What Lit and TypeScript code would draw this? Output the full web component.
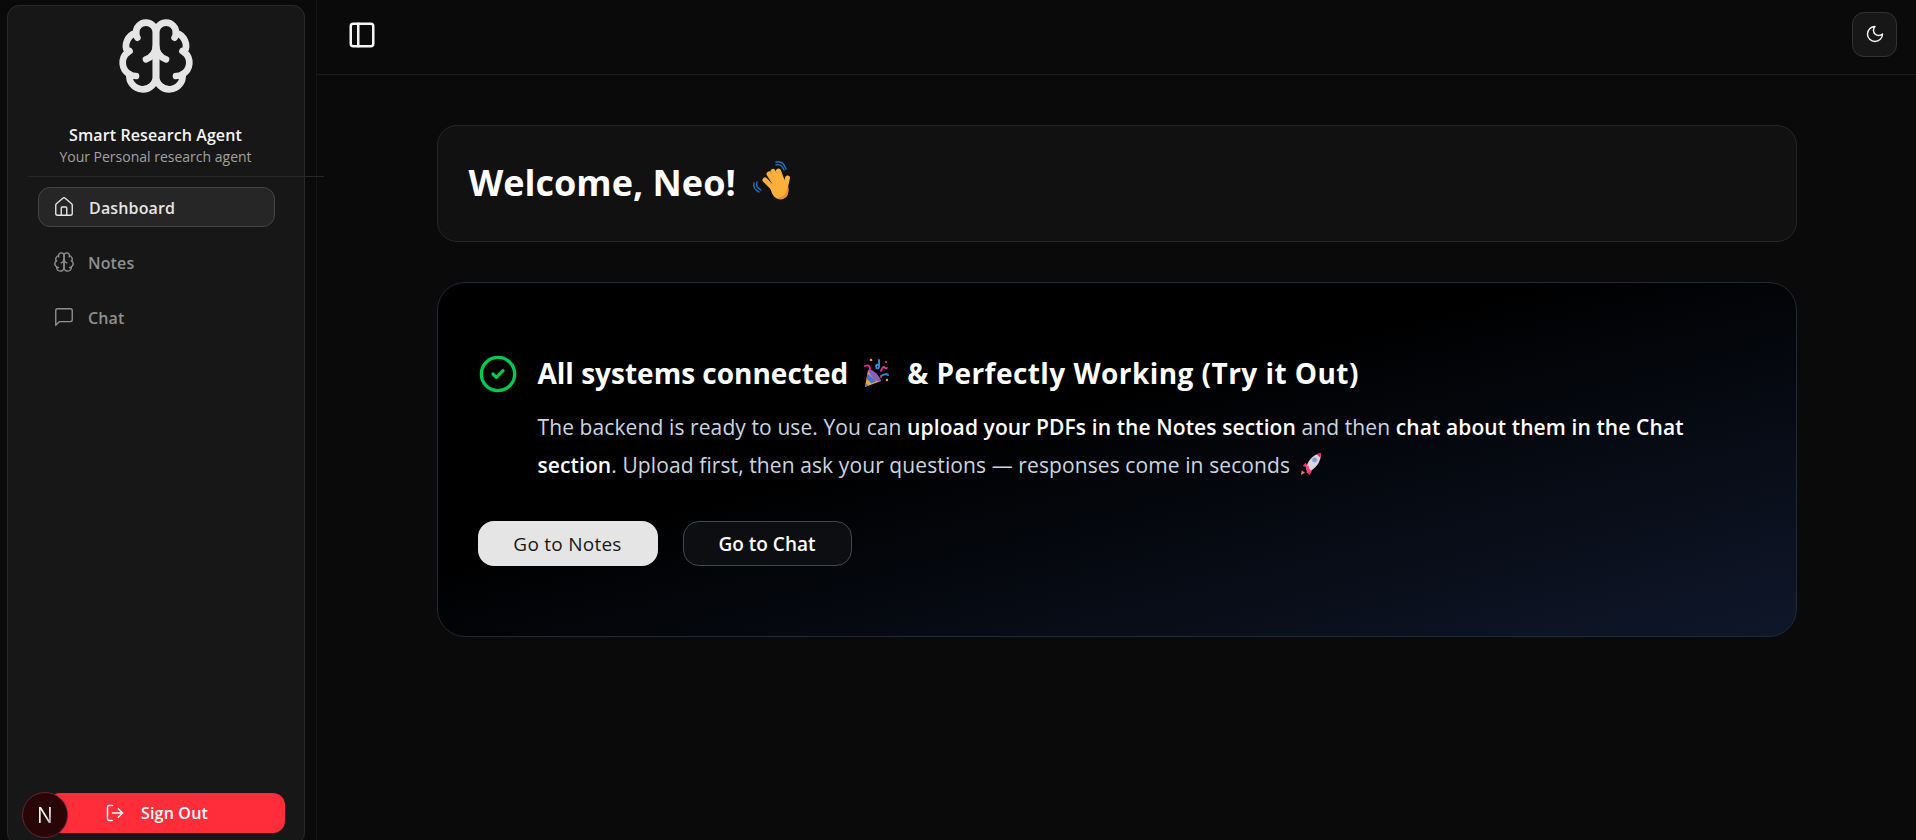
import { LitElement, html, css, svg } from 'lit';
import { customElement } from 'lit/decorators.js';

const icon = (content: unknown, size: number, width = 2) => html`
  <svg xmlns="http://www.w3.org/2000/svg" width=${size} height=${size} viewBox="0 0 24 24" fill="none"
       stroke="currentColor" stroke-width=${width} stroke-linecap="round" stroke-linejoin="round">${content}</svg>`;

const brain = svg`
  <path d="M12 5a3 3 0 1 0-5.997.125 4 4 0 0 0-2.526 5.77 4 4 0 0 0 .556 6.588A4 4 0 1 0 12 18Z"/>
  <path d="M12 5a3 3 0 1 1 5.997.125 4 4 0 0 1 2.526 5.77 4 4 0 0 1-.556 6.588A4 4 0 1 1 12 18Z"/>
  <path d="M15 13a4.5 4.5 0 0 1-3-4 4.5 4.5 0 0 1-3 4"/>
  <path d="M17.599 6.5a3 3 0 0 0 .399-1.375"/>
  <path d="M6.003 5.125A3 3 0 0 0 6.401 6.5"/>
  <path d="M3.477 10.896a4 4 0 0 1 .585-.396"/>
  <path d="M19.938 10.5a4 4 0 0 1 .585.396"/>
  <path d="M6 18a4 4 0 0 1-1.967-.516"/>
  <path d="M19.967 17.484A4 4 0 0 1 18 18"/>`;
const home = svg`
  <path d="M15 21v-8a1 1 0 0 0-1-1h-4a1 1 0 0 0-1 1v8"/>
  <path d="M3 10a2 2 0 0 1 .709-1.528l7-5.999a2 2 0 0 1 2.582 0l7 5.999A2 2 0 0 1 21 10v9a2 2 0 0 1-2 2H5a2 2 0 0 1-2-2z"/>`;
const chat = svg`<path d="M21 15a2 2 0 0 1-2 2H7l-4 4V5a2 2 0 0 1 2-2h14a2 2 0 0 1 2 2z"/>`;
const logout = svg`
  <path d="M9 21H5a2 2 0 0 1-2-2V5a2 2 0 0 1 2-2h4"/>
  <polyline points="16 17 21 12 16 7"/>
  <line x1="21" x2="9" y1="12" y2="12"/>`;
const panel = svg`
  <rect width="18" height="18" x="3" y="3" rx="2"/>
  <path d="M9 3v18"/>`;
const moon = svg`<path d="M12 3a6 6 0 0 0 9 9 9 9 0 1 1-9-9Z"/>`;
const check = svg`
  <circle cx="12" cy="12" r="10"/>
  <path d="m9 12 2 2 4-4"/>`;

// emoji are drawn, the sandbox has no colour emoji font
const wave = html`
  <svg class="emoji wave" viewBox="0 0 55 50" xmlns="http://www.w3.org/2000/svg">
    <g fill="none" stroke="#1b74c4" stroke-width="1.4" stroke-linecap="round">
      <path d="M31 9c3-1 6 0 8 5"/>
      <path d="M31 6c4-1 8 1 10 7"/>
      <path d="M12 26c-1 3 0 6 4 8"/>
      <path d="M9 27c-1 4 1 7 5 9"/>
    </g>
    <g fill="none" stroke="#fbb03b" stroke-width="5" stroke-linecap="round">
      <path d="M28 32 20 24"/>
      <path d="M31 29 24 18"/>
      <path d="M35 27 28 15.500"/>
      <path d="M38 27 33.500 15"/>
      <path d="M40 33 42.500 22"/>
    </g>
    <path fill="#fbb03b" d="M25 31l7-7 11 6c1 5 0 9-2 11-3 3-7 3-10 1-3-2-5-6-6-11z"/>
    <path fill="#e8912d" d="M31 42c4 2 8 1 10-1 2-2 3-6 2-11-1 4-2 7-4 9-2 2-5 3-8 3z"/>
  </svg>`;

const party = html`
  <svg class="emoji party" viewBox="0 0 45 45" xmlns="http://www.w3.org/2000/svg">
    <path fill="#f4a52e" d="M11 36 14 19l13 11z"/>
    <path fill="#4a6fd8" d="M12.500 27.500 13.500 22.500 22.500 30 17.500 32.500z"/>
    <path fill="#4a6fd8" d="M11 36l.7-4 2.500 2.500z"/>
    <path fill="#8a5cc0" d="M14 19c2-1 5 0 8 3s5 7 5 8c-2 1-5 0-8-3s-5-7-5-8z"/>
    <g fill="none" stroke-width="1.800" stroke-linecap="round">
      <path stroke="#e82f8f" d="M11 15c2-1 3-1 4 0s1 3 1 4"/>
      <path stroke="#2b8fe0" d="M25 9v7c0 2-3 2-3-.5s3-2 3-.5"/>
      <path stroke="#e82f8f" d="M27 20c1-3 2-4 3-4s1 2 3 1"/>
      <path stroke="#2b8fe0" d="M27 25c3-2 5-3 7-1"/>
    </g>
    <circle cx="17" cy="9" r="1.300" fill="#f4a52e"/>
    <circle cx="32" cy="11" r="1.100" fill="#e82f8f"/>
    <circle cx="33" cy="29" r="1.200" fill="#f4a52e"/>
    <circle cx="27" cy="26" r=".900" fill="#e82f8f"/>
  </svg>`;

const rocket = html`
  <svg class="emoji rocket" viewBox="0 0 24 26" xmlns="http://www.w3.org/2000/svg">
    <path fill="#f0803c" d="M1 25l1-5 3.500 2.500z"/>
    <path fill="#e8386a" d="M3 15l3-3.500 7 9-2.500 4.500L7 22l1-5z"/>
    <path fill="#dcd7de" d="M7 19C7 11 13 3 23 1c0 9-5 16-12 20z"/>
    <path fill="#e8215a" d="M18 2.200 23 1c0 2-.3 3.500-.9 5z"/>
    <circle cx="16" cy="8.500" r="2.700" fill="#6da4e8" stroke="#b9b3c0" stroke-width=".8"/>
    <path fill="#f2467e" d="M6 17l3-3 1 4 2 2-3.500 2.500z"/>
  </svg>`;

@customElement('app-root')
class AppRoot extends LitElement {
  static styles = css`
    :host {
      display: block;
      height: 100vh;
      overflow: hidden;
      background: #0a0a0a;
      color: #fafafa;
      font-family: "Open Sans", "Noto Sans", sans-serif;
    }
    * {
      box-sizing: border-box;
    }
    .layout {
      display: flex;
      height: 100vh;
    }
    .rail {
      flex: none;
      width: 317px;
      height: 100%;
      padding: 5px 11px 0 7px;
      border-right: 1px solid #151515;
    }
    .side {
      position: relative;
      display: flex;
      flex-direction: column;
      height: 100vh;
      padding-bottom: 11px;
      background: #171717;
      border: 1px solid #2a2a2a;
      border-radius: 12px;
    }
    .brand {
      display: flex;
      flex-direction: column;
      align-items: center;
      height: 171px;
      padding: 10px 41px 0 0;
      margin: 0 -20px 0 20px;
      border-bottom: 1px solid #262626;
    }
    .brand svg {
      display: block;
      color: #e5e5e5;
      flex: none;
    }
    .brand-name {
      margin-top: 27px;
      font-size: 16px;
      line-height: 24px;
      font-weight: 600;
      letter-spacing: 0.1px;
      color: #f5f5f5;
    }
    .brand-sub {
      font-size: 14px;
      line-height: 20px;
      color: #a1a1a1;
    }
    nav {
      display: flex;
      flex-direction: column;
      gap: 15px;
      margin: 10px 29px 0 30px;
    }
    .item {
      display: flex;
      align-items: center;
      gap: 13px;
      height: 40px;
      padding: 0 14px;
      font-size: 16px;
      font-weight: 600;
      letter-spacing: 0.15px;
      color: #8f8f8f;
      border: 1px solid transparent;
      border-radius: 12px;
    }
    .item svg {
      flex: none;
    }
    .item span {
      margin-top: 2px;
    }
    .item.active {
      gap: 14px;
      background: #262626;
      border-color: #454545;
      color: #e5e5e5;
    }
    .signout {
      display: flex;
      align-items: center;
      justify-content: center;
      gap: 16px;
      height: 40px;
      margin: auto 19px 0 40px;
      padding-right: 20px;
      background: #ff2d3a;
      border-radius: 12px;
      color: #fff;
      font-size: 16px;
      font-weight: 600;
      letter-spacing: 0.2px;
    }
    .badge {
      position: absolute;
      left: 14px;
      bottom: 6px;
      width: 46px;
      height: 46px;
      display: flex;
      align-items: center;
      justify-content: center;
      border-radius: 50%;
      background: #2a0508;
      border: 1px solid #5a2a2e;
    }
    .badge span {
      font-size: 21px;
      background: linear-gradient(135deg, #fff 55%, #777);
      -webkit-background-clip: text;
      background-clip: text;
      color: transparent;
    }
    .content {
      flex: 1;
      min-width: 0;
    }
    header {
      display: flex;
      align-items: center;
      justify-content: space-between;
      height: 75px;
      padding: 0 19px 0 30px;
      border-bottom: 1px solid #1a1f1a;
    }
    .ghost {
      display: flex;
      margin-top: -5px;
      color: #f5f5f5;
    }
    .theme {
      display: flex;
      align-items: center;
      justify-content: center;
      width: 45px;
      height: 45px;
      margin-top: -6px;
      background: #171717;
      border: 1px solid #333;
      border-radius: 12px;
      color: #f5f5f5;
    }
    main {
      display: flex;
      flex-direction: column;
      gap: 40px;
      width: 1360px;
      margin: 50px auto 0;
    }
    .welcome {
      height: 117px;
      padding: 0 0 2px 31px;
      display: flex;
      align-items: center;
      background: #111111;
      border: 1px solid #262626;
      border-radius: 20px;
    }
    h1 {
      display: flex;
      align-items: center;
      margin: 0;
      font-size: 36px;
      font-weight: 700;
      color: #fff;
    }
    .emoji {
      flex: none;
      display: inline-block;
    }
    .wave {
      width: 55px;
      height: 50px;
      margin: -4px 0 0 9px;
    }
    .hero {
      height: 355px;
      padding: 72px 40px 0;
      background: linear-gradient(to bottom right, #000 40%, #0f172a 100%);
      border: 1px solid #1e293b;
      border-radius: 28px;
    }
    .row {
      display: flex;
      gap: 20px;
    }
    .ok {
      flex: none;
      display: flex;
      align-self: flex-start;
      color: #00c950;
      margin-top: -1px;
    }
    h2 {
      display: flex;
      align-items: center;
      height: 36px;
      margin: 0;
      font-size: 28px;
      font-weight: 700;
      color: #fff;
    }
    h2 span {
      letter-spacing: 0.45px;
    }
    .party {
      width: 45px;
      height: 45px;
      margin: 0 8px 0 6px;
    }
    p {
      width: 1160px;
      margin: 17px 0 0;
      font-size: 21px;
      line-height: 38px;
      letter-spacing: 0.1px;
      color: #cbd5e1;
    }
    p b {
      font-weight: 600;
      color: #fff;
    }
    .rocket {
      width: 22px;
      height: 24px;
      margin-left: 4px;
      vertical-align: -3px;
    }
    .actions {
      display: flex;
      gap: 25px;
      margin-top: 37px;
    }
    .btn {
      display: flex;
      align-items: center;
      justify-content: center;
      height: 45px;
      border-radius: 16px;
      font-size: 19px;
      font-weight: 500;
      letter-spacing: 0.25px;
    }
    .btn.primary {
      width: 180px;
      background: #e5e5e5;
      color: #171717;
    }
    .btn.outline {
      width: 169px;
      background: #0d0e12;
      border: 1px solid #3f4656;
      color: #fff;
      font-weight: 600;
      letter-spacing: 0;
    }
  `;

  render() {
    return html`
      <div class="layout">
        <div class="rail">
          <aside class="side">
            <div class="brand">
              ${icon(brain, 80, 2)}
              <div class="brand-name">Smart Research Agent</div>
              <div class="brand-sub">Your Personal research agent</div>
            </div>
            <nav>
              <div class="item active">${icon(home, 22, 1.5)}<span>Dashboard</span></div>
              <div class="item">${icon(brain, 22, 1.5)}<span>Notes</span></div>
              <div class="item">${icon(chat, 22, 1.5)}<span>Chat</span></div>
            </nav>
            <div class="signout">${icon(logout, 20, 1.75)}Sign Out</div>
            <div class="badge"><span>N</span></div>
          </aside>
        </div>
        <div class="content">
          <header>
            <div class="ghost">${icon(panel, 30, 2)}</div>
            <div class="theme">${icon(moon, 20, 1.75)}</div>
          </header>
          <main>
            <section class="welcome">
              <h1>Welcome, Neo!${wave}</h1>
            </section>
            <section class="hero">
              <div class="row">
                <div class="ok">${icon(check, 40, 2)}</div>
                <div>
                  <h2>All systems connected${party}<span>&amp; Perfectly Working (Try it Out)</span></h2>
                  <p>The backend is ready to use. You can <b>upload your PDFs in the Notes section</b> and then <b>chat about them in the Chat section</b>. Upload first, then ask your questions — responses come in seconds${rocket}</p>
                </div>
              </div>
              <div class="actions">
                <div class="btn primary">Go to Notes</div>
                <div class="btn outline">Go to Chat</div>
              </div>
            </section>
          </main>
        </div>
      </div>
    `;
  }
}
